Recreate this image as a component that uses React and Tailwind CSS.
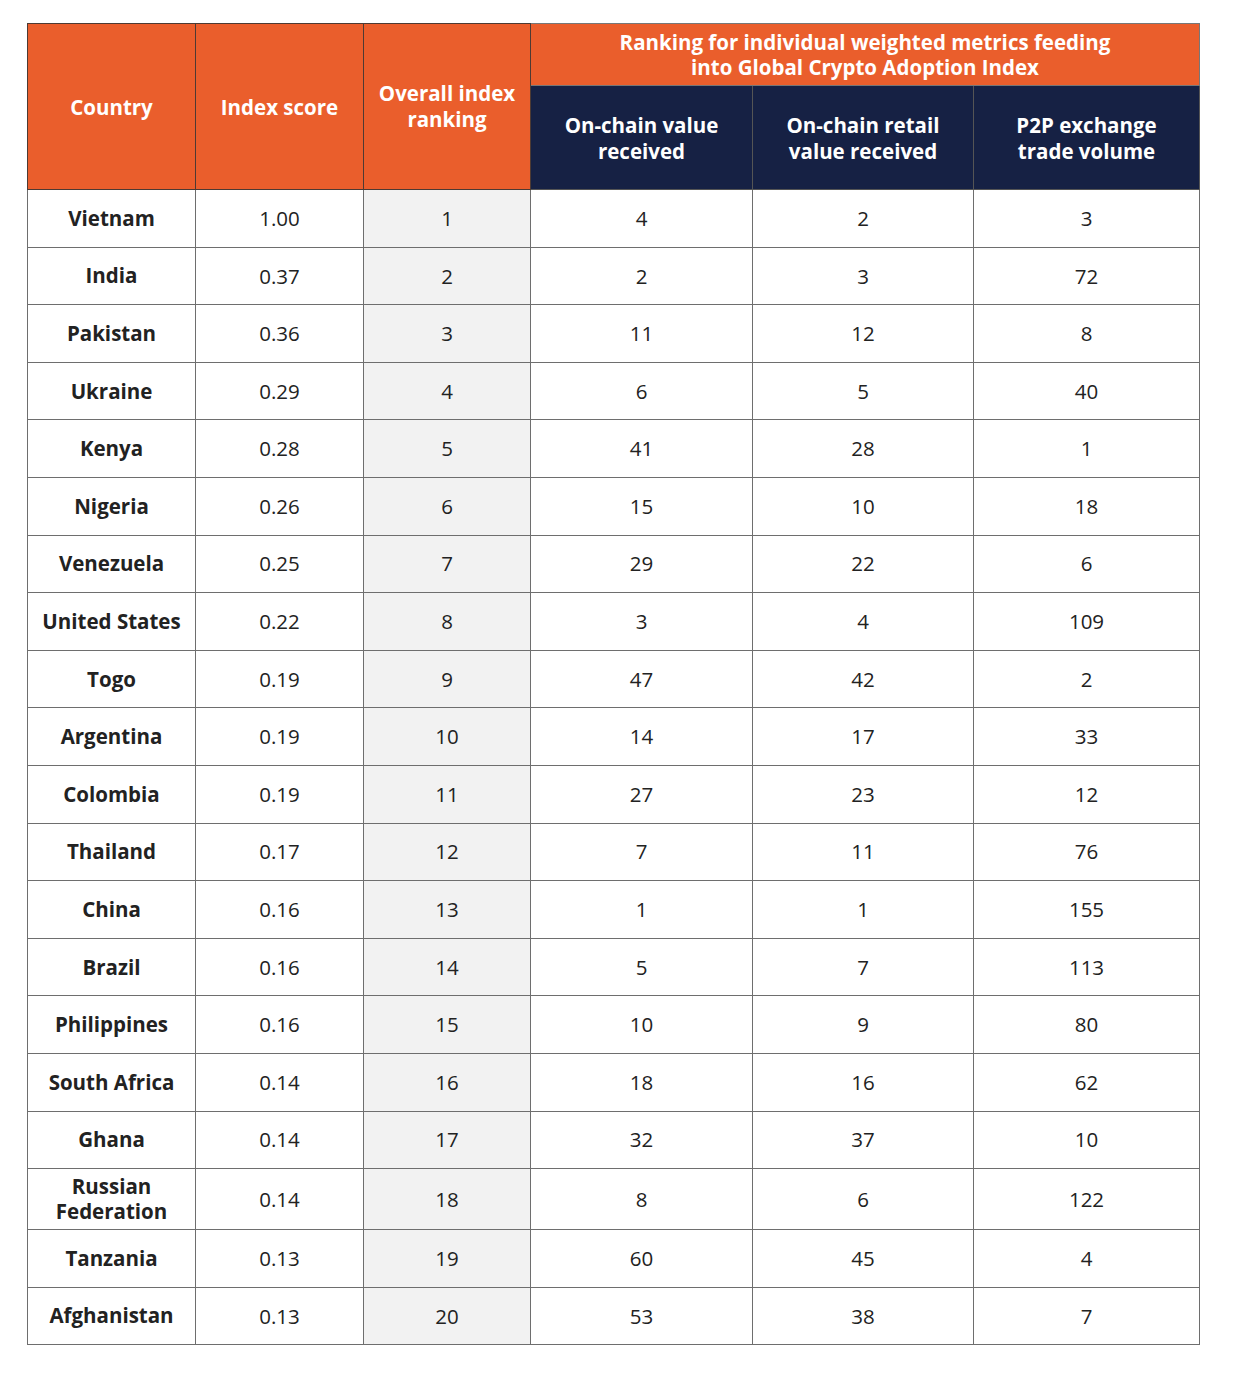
import React from "react";

const rows = [
  ["Vietnam", "1.00", "1", "4", "2", "3"],
  ["India", "0.37", "2", "2", "3", "72"],
  ["Pakistan", "0.36", "3", "11", "12", "8"],
  ["Ukraine", "0.29", "4", "6", "5", "40"],
  ["Kenya", "0.28", "5", "41", "28", "1"],
  ["Nigeria", "0.26", "6", "15", "10", "18"],
  ["Venezuela", "0.25", "7", "29", "22", "6"],
  ["United States", "0.22", "8", "3", "4", "109"],
  ["Togo", "0.19", "9", "47", "42", "2"],
  ["Argentina", "0.19", "10", "14", "17", "33"],
  ["Colombia", "0.19", "11", "27", "23", "12"],
  ["Thailand", "0.17", "12", "7", "11", "76"],
  ["China", "0.16", "13", "1", "1", "155"],
  ["Brazil", "0.16", "14", "5", "7", "113"],
  ["Philippines", "0.16", "15", "10", "9", "80"],
  ["South Africa", "0.14", "16", "18", "16", "62"],
  ["Ghana", "0.14", "17", "32", "37", "10"],
  ["Russian Federation", "0.14", "18", "8", "6", "122"],
  ["Tanzania", "0.13", "19", "60", "45", "4"],
  ["Afghanistan", "0.13", "20", "53", "38", "7"],
];

export default function App() {
  return (
    <div className="w-[1234px] h-[1374px] bg-white pt-[23px] pl-[27px]" style={{ fontFamily: "'Open Sans', sans-serif" }}>
      <table className="border-collapse table-fixed w-[1172px] text-[#222] text-[20.5px]">
        <colgroup>
          <col className="w-[168px]" />
          <col className="w-[168px]" />
          <col className="w-[167px]" />
          <col className="w-[222px]" />
          <col className="w-[221px]" />
          <col className="w-[226px]" />
        </colgroup>
        <thead>
          <tr className="h-[62px]">
            <th rowSpan={2} className="bg-[#ea5e2c] text-white font-bold border border-[#4d3a33] text-center leading-[26px] px-0">Country</th>
            <th rowSpan={2} className="bg-[#ea5e2c] text-white font-bold border border-[#4d3a33] text-center leading-[26px] px-0">Index score</th>
            <th rowSpan={2} className="bg-[#ea5e2c] text-white font-bold border border-[#4d3a33] text-center leading-[26px] px-0 pb-[2px]">Overall index<br />ranking</th>
            <th colSpan={3} className="bg-[#ea5e2c] text-white font-bold border border-[#777] text-center leading-[25px]">
              Ranking for individual weighted metrics feeding<br />into Global Crypto Adoption Index
            </th>
          </tr>
          <tr className="h-[104px]">
            <th className="bg-[#162144] text-white font-bold border border-[#555] text-center leading-[26px]">On-chain value<br />received</th>
            <th className="bg-[#162144] text-white font-bold border border-[#555] text-center leading-[26px]">On-chain retail<br />value received</th>
            <th className="bg-[#162144] text-white font-bold border border-[#555] text-center leading-[26px]">P2P exchange<br />trade volume</th>
          </tr>
        </thead>
        <tbody>
          {rows.map((r, i) => (
            <tr key={r[0]} className={i === 17 ? "h-[61px]" : "h-[57.6px]"}>
              <td className="border border-[#6e6e6e] text-center font-bold leading-[25px] px-0">
                {r[0] === "Russian Federation" ? (<>Russian<br />Federation</>) : r[0]}
              </td>
              <td className="border border-[#6e6e6e] text-center">{r[1]}</td>
              <td className="border border-[#6e6e6e] text-center bg-[#f2f2f2]">{r[2]}</td>
              <td className="border border-[#6e6e6e] text-center">{r[3]}</td>
              <td className="border border-[#6e6e6e] text-center">{r[4]}</td>
              <td className="border border-[#6e6e6e] text-center">{r[5]}</td>
            </tr>
          ))}
        </tbody>
      </table>
    </div>
  );
}
